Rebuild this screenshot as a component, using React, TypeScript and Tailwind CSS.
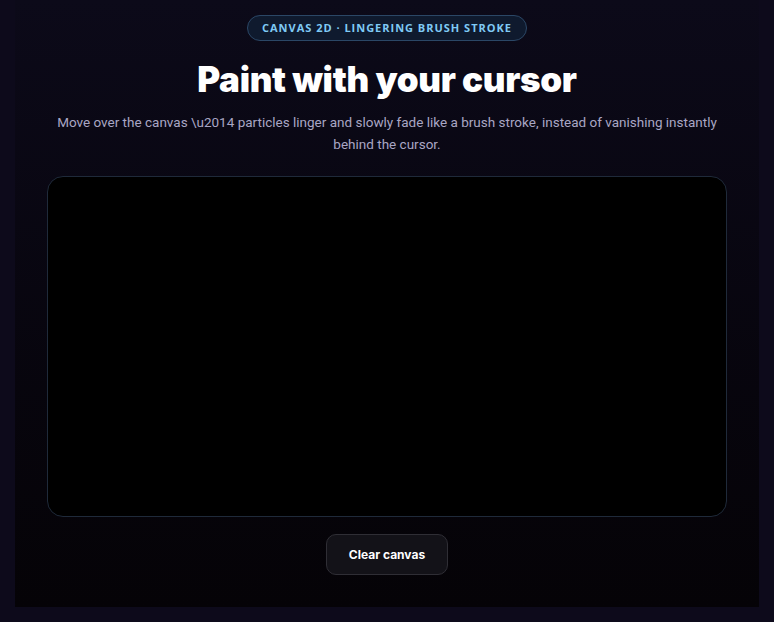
import React from "react";

export default function App() {
  return (
    <div className="min-h-[622px] w-full bg-[#0d0a1b] px-[15px]" style={{ fontFamily: "Inter, 'Noto Sans', sans-serif" }}>
      <div className="flex h-[607px] flex-col items-center bg-gradient-to-b from-[#0c0a19] to-[#050307] pt-[15px]">
        <div
          className="flex h-[26px] w-[280px] items-center justify-center whitespace-nowrap rounded-full border border-[#2b4766] bg-[#0f1a2e] text-[11px] font-bold uppercase tracking-[0.09em] text-[#7fcaf5]"
          style={{ fontFamily: "'Open Sans', sans-serif" }}
        >
          Canvas 2D · Lingering brush stroke
        </div>
        <h1 className="mt-[16px] text-[35px] font-black leading-[44px] tracking-[-0.01em] text-white">
          Paint with your cursor
        </h1>
        <p
          className="mt-[10px] max-w-[670px] text-center text-[13.5px] leading-[22px] text-[#a9a6c4]"
          style={{ fontFamily: "Roboto, sans-serif" }}
        >
          Move over the canvas \u2014 particles linger and slowly fade like a brush stroke, instead of vanishing instantly behind the cursor.
        </p>
        <div className="mt-[21px] h-[341px] w-[680px] rounded-[16px] border border-[#1f2a3a] bg-black" />
        <button className="mt-[17px] h-[41px] w-[122px] rounded-[10px] border border-[#2f2e35] bg-[#131218] text-[12px] font-bold text-white">
          Clear canvas
        </button>
      </div>
    </div>
  );
}
